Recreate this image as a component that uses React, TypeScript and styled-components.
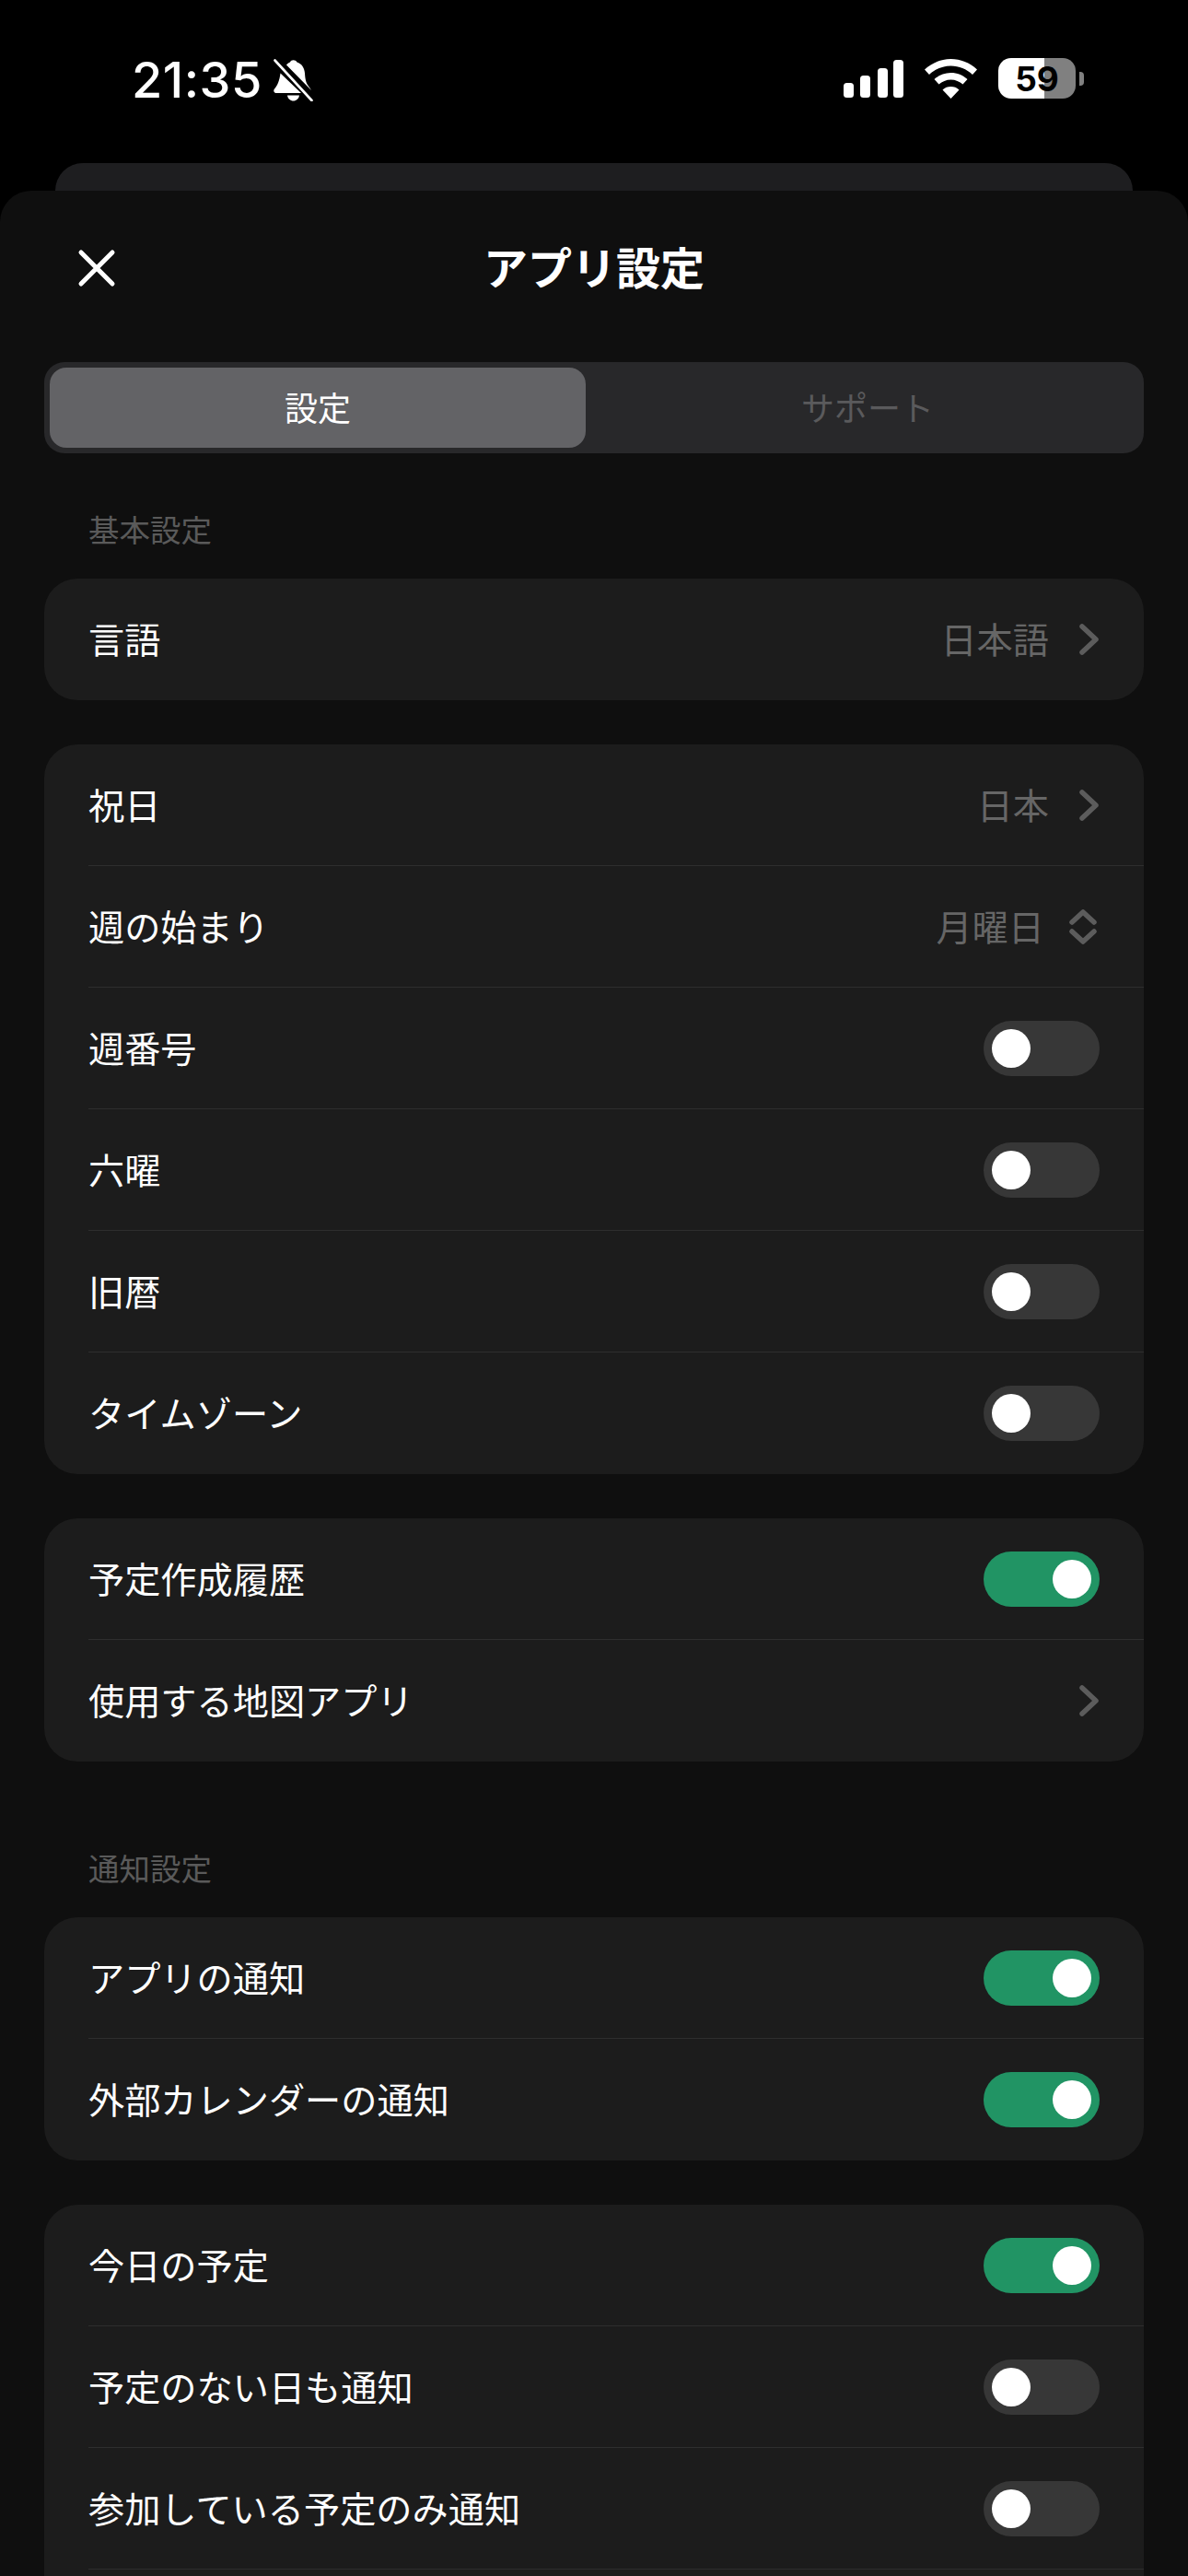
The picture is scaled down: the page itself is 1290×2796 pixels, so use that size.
import React from "react";
import styled, { createGlobalStyle } from "styled-components";

const GlobalStyle = createGlobalStyle`
  html, body {
    margin: 0;
    padding: 0;
    height: 2796px;
    overflow: hidden;
    background: #000;
  }
  body {
    font-family: "Inter", "Noto Sans CJK JP", sans-serif;
    color: #fff;
  }
`;

const Screen = styled.div`
  width: 1290px;
  height: 2796px;
  overflow: hidden;
  background: #000;
`;

const StatusBar = styled.div`
  display: flex;
  justify-content: space-between;
  align-items: flex-start;
  height: 177px;
  box-sizing: border-box;
  padding: 62px 113px 0 143px;
`;

const StatusLeft = styled.div`
  display: flex;
  align-items: center;
  gap: 11px;
`;

const Clock = styled.span`
  font-family: "Inter", sans-serif;
  font-size: 54px;
  line-height: 50px;
  font-weight: 500;
  letter-spacing: 0.5px;
`;

const StatusRight = styled.div`
  display: flex;
  align-items: center;
  gap: 23px;
  height: 46px;
  padding-right: 9px;
`;

const Battery = styled.div`
  position: relative;
  width: 84px;
  height: 44px;
  border-radius: 14px;
  background: linear-gradient(90deg, #fff 0 50px, #808080 50px 100%);
  display: flex;
  align-items: center;
  justify-content: center;
  color: #000;
  font-family: "Inter", sans-serif;
  font-weight: 700;
  font-size: 37px;
  letter-spacing: 0;
  &::after {
    content: "";
    position: absolute;
    left: 88px;
    top: 15px;
    width: 5px;
    height: 15px;
    border-radius: 0 4px 4px 0;
    background: #808080;
  }
`;

const BackCard = styled.div`
  height: 30px;
  margin: 0 60px;
  background: #1e1e20;
  border-radius: 30px 30px 0 0;
`;

const Sheet = styled.div`
  background: #0f0f0f;
  border-radius: 34px 34px 0 0;
  padding: 0 48px;
`;

const Header = styled.div`
  position: relative;
  display: flex;
  align-items: center;
  justify-content: center;
  height: 186px;
`;

const CloseButton = styled.button`
  position: absolute;
  left: 32px;
  top: 59px;
  width: 50px;
  height: 50px;
  padding: 0;
  background: none;
  border: 0;
  color: #fff;
`;

const Title = styled.h1`
  margin: 0 0 24px;
  font-family: "Noto Sans CJK JP", sans-serif;
  font-size: 48px;
  font-weight: 700;
  line-height: 60px;
`;

const Segment = styled.div`
  display: grid;
  grid-template-columns: 582px 1fr;
  height: 99px;
  box-sizing: border-box;
  padding: 6px;
  background: #28282a;
  border-radius: 22px;
`;

const SegmentItem = styled.div<{ $active?: boolean }>`
  display: flex;
  align-items: center;
  justify-content: center;
  box-sizing: border-box;
  padding: 0 0 4px ${(p) => (p.$active ? 0 : 12)}px;
  border-radius: 18px;
  font-family: "Noto Sans CJK JP", sans-serif;
  font-size: 36px;
  color: ${(p) => (p.$active ? "#fff" : "#5a5a5c")};
  background: ${(p) => (p.$active ? "#636366" : "transparent")};
`;

const SectionLabel = styled.div<{ $top: number }>`
  margin: ${(p) => p.$top}px 0 11px 48px;
  height: 88px;
  display: flex;
  align-items: center;
  font-family: "Noto Sans CJK JP", sans-serif;
  font-size: 33.5px;
  color: #5a5a5a;
`;

const Card = styled.div`
  background: #1c1c1c;
  border-radius: 36px;
  margin-bottom: 48px;
  overflow: hidden;
`;

const Row = styled.div`
  display: flex;
  align-items: center;
  justify-content: space-between;
  height: 132px;
  box-sizing: border-box;
  margin-left: 48px;
  padding-right: 48px;
  & + & {
    box-shadow: 0 -1px 0 #2e2e2e;
  }
`;

const RowLabel = styled.span`
  padding-bottom: 5px;
  font-family: "Noto Sans CJK JP", sans-serif;
  font-size: 39.2px;
  color: #fff;
`;

const RowValue = styled.div`
  display: flex;
  align-items: center;
  gap: 27px;
  font-family: "Noto Sans CJK JP", sans-serif;
  font-size: 39.2px;
  color: #666;
  & > span {
    padding-bottom: 5px;
  }
`;

const Toggle = styled.div<{ $on?: boolean }>`
  display: flex;
  align-items: center;
  justify-content: ${(p) => (p.$on ? "flex-end" : "flex-start")};
  width: 126px;
  height: 60px;
  box-sizing: border-box;
  padding: 0 9px;
  border-radius: 30px;
  background: ${(p) => (p.$on ? "#219464" : "#373737")};
  &::before {
    content: "";
    width: 42px;
    height: 42px;
    border-radius: 50%;
    background: #fff;
  }
`;

const Chevron = () => (
  <svg width="28" height="34" viewBox="-6 0 28 34" fill="none" stroke="#5c5c5c" strokeWidth="5.5" strokeLinecap="round" strokeLinejoin="round">
    <path d="M3 3l15 14L3 31" />
  </svg>
);

const UpDownIcon = styled.svg`
  margin-right: 3px;
`;

const UpDown = () => (
  <UpDownIcon width="30" height="38" viewBox="0 0 30 38" fill="none" stroke="#5c5c5c" strokeWidth="5.5" strokeLinecap="round" strokeLinejoin="round">
    <path d="M3 14L15 3l12 11" />
    <path d="M3 24l12 11 12-11" />
  </UpDownIcon>
);

const CloseIcon = () => (
  <svg width="50" height="50" viewBox="0 0 50 50" fill="none" stroke="currentColor" strokeWidth="5" strokeLinecap="round">
    <path d="M8 8l34 34M42 8L8 42" />
  </svg>
);

const BellOff = () => (
  <svg width="44" height="46" viewBox="0 0 44 46" fill="#fff">
    <path d="M19 3.500c1-3 6-3 7.500 0 5 1.500 8 6 8.500 12 .4 6 1 10 4 14 1 1.500 2.500 3 3 4.500L15 6.500c1-1.200 2.500-2.300 4-3z" />
    <path d="M8.500 15.500L31 37H4c-2.500 0-3.500-2.500-2-4.500 3.500-4 5.500-9 6.500-17z" />
    <path d="M16 39.500h13c-.5 3.500-3.200 6-6.500 6s-6-2.500-6.500-6z" />
    <path d="M3 1.500l39 43" stroke="#000" strokeWidth="4" />
    <path d="M2.500 1.500l40 43.500" stroke="#fff" strokeWidth="2.600" strokeLinecap="round" />
  </svg>
);

const Signal = () => (
  <svg width="65" height="41" viewBox="0 0 65 41" fill="#fff">
    <rect x="0" y="25" width="11" height="16" rx="3.500" />
    <rect x="18" y="17" width="11" height="24" rx="3.500" />
    <rect x="37" y="9" width="11" height="32" rx="3.500" />
    <rect x="54" y="0" width="11" height="41" rx="3.500" />
  </svg>
);

const Wifi = () => (
  <svg width="57" height="43" viewBox="0 0 57 43" fill="#fff">
    <path d="M28.500 0C39 0 49 4 57 11.500l-5 5.500C45.500 11 37.500 7.500 28.500 7.500S11.500 11 5 17L0 11.500C8 4 18 0 28.500 0z" />
    <path d="M28.500 15c6.800 0 13 2.500 18 7l-5 5.500c-3.500-3-8-5-13-5s-9.500 2-13 5l-5-5.500c5-4.500 11.200-7 18-7z" />
    <path d="M28.500 30c3.500 0 6.500 1.200 9 3.400L28.500 43l-9-9.600c2.500-2.200 5.500-3.400 9-3.400z" />
  </svg>
);

type RowData = {
  label: string;
  value?: string;
  control: "chevron" | "updown" | "on" | "off";
};

const RowControl = ({ value, control }: Omit<RowData, "label">) => {
  if (control === "on") return <Toggle $on />;
  if (control === "off") return <Toggle />;
  return (
    <RowValue>
      {value && <span>{value}</span>}
      {control === "chevron" ? <Chevron /> : <UpDown />}
    </RowValue>
  );
};

const SettingsCard = ({ rows }: { rows: RowData[] }) => (
  <Card>
    {rows.map((r) => (
      <Row key={r.label}>
        <RowLabel>{r.label}</RowLabel>
        <RowControl value={r.value} control={r.control} />
      </Row>
    ))}
  </Card>
);

export default function App() {
  return (
    <Screen>
      <GlobalStyle />
      <StatusBar>
        <StatusLeft>
          <Clock>21:35</Clock>
          <BellOff />
        </StatusLeft>
        <StatusRight>
          <Signal />
          <Wifi />
          <Battery>59</Battery>
        </StatusRight>
      </StatusBar>
      <BackCard />
      <Sheet>
        <Header>
          <CloseButton>
            <CloseIcon />
          </CloseButton>
          <Title>アプリ設定</Title>
        </Header>
        <Segment>
          <SegmentItem $active>設定</SegmentItem>
          <SegmentItem>サポート</SegmentItem>
        </Segment>
        <SectionLabel $top={37}>基本設定</SectionLabel>
        <SettingsCard rows={[{ label: "言語", value: "日本語", control: "chevron" }]} />
        <SettingsCard
          rows={[
            { label: "祝日", value: "日本", control: "chevron" },
            { label: "週の始まり", value: "月曜日", control: "updown" },
            { label: "週番号", control: "off" },
            { label: "六曜", control: "off" },
            { label: "旧暦", control: "off" },
            { label: "タイムゾーン", control: "off" },
          ]}
        />
        <SettingsCard
          rows={[
            { label: "予定作成履歴", control: "on" },
            { label: "使用する地図アプリ", control: "chevron" },
          ]}
        />
        <SectionLabel $top={70}>通知設定</SectionLabel>
        <SettingsCard
          rows={[
            { label: "アプリの通知", control: "on" },
            { label: "外部カレンダーの通知", control: "on" },
          ]}
        />
        <SettingsCard
          rows={[
            { label: "今日の予定", control: "on" },
            { label: "予定のない日も通知", control: "off" },
            { label: "参加している予定のみ通知", control: "off" },
            { label: "", control: "off" },
          ]}
        />
      </Sheet>
    </Screen>
  );
}
